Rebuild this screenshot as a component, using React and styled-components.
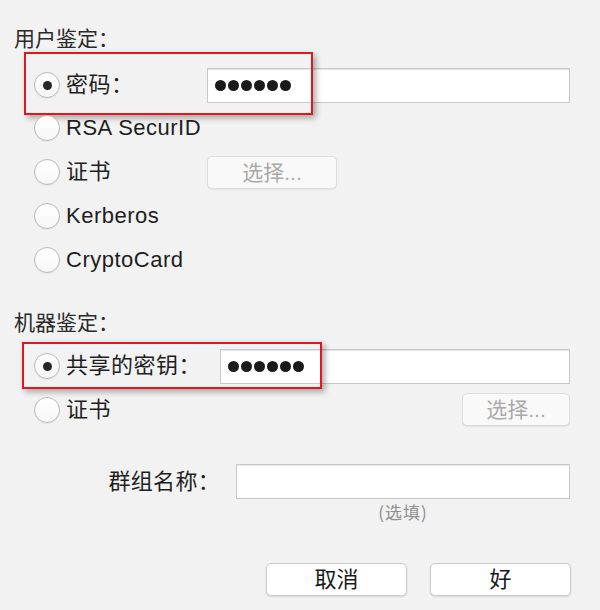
import React from "react"
import styled, { createGlobalStyle } from "styled-components"

const GlobalStyle = createGlobalStyle`
  html, body {
    margin: 0;
    padding: 0;
    background: #f2f2f2;
  }
  body {
    font-family: "Liberation Sans", "Noto Sans CJK SC", sans-serif;
    color: #1e1e1e;
  }
`

const Page = styled.div`
  width: 600px;
  height: 610px;
  box-sizing: border-box;
  padding: 27px 30px 0 14px;
  overflow: hidden;
`

const SectionTitle = styled.div`
  font-size: 21px;
  line-height: 24px;
  height: 24px;
  color: #2a2a2a;
  margin-top: ${p => p.$top || 0}px;
`

const OptionList = styled.div`
  margin-left: 20px;
  margin-top: ${p => p.$top}px;
  display: flex;
  flex-direction: column;
`

const Row = styled.div`
  position: relative;
  display: grid;
  grid-template-columns: ${p => p.$labelWidth}px 1fr;
  align-items: center;
  height: ${p => p.$height}px;
`

const RadioLabel = styled.label`
  display: flex;
  align-items: center;
  gap: 6px;
  font-size: 22px;
  line-height: 26px;
  letter-spacing: 0.5px;
`

const Radio = styled.span`
  box-sizing: border-box;
  width: 26px;
  height: 26px;
  border-radius: 50%;
  border: 1px solid #b9b9b9;
  background: linear-gradient(#ffffff, #f7f7f7);
  box-shadow: 0 1px 1px rgba(0, 0, 0, 0.06);
  display: flex;
  align-items: center;
  justify-content: center;

  &::after {
    content: "";
    width: 9px;
    height: 9px;
    border-radius: 50%;
    background: ${p => (p.$checked ? "#262626" : "transparent")};
  }
`

const Field = styled.div`
  box-sizing: border-box;
  height: 35px;
  background: #ffffff;
  border: 1px solid #c8c8c8;
  box-shadow: inset 0 1px 0 #e6e6e6;
  display: flex;
  align-items: center;
  padding-left: 7px;
`

const Dots = styled.div`
  display: flex;
  gap: 2px;
`

const Dot = styled.span`
  width: 11px;
  height: 11px;
  border-radius: 50%;
  background: #1a1a1a;
`

const ChooseButton = styled.button`
  box-sizing: border-box;
  width: ${p => p.$width}px;
  height: 33px;
  justify-self: ${p => (p.$right ? "end" : "start")};
  border: 1px solid #dddddd;
  border-radius: 5px;
  background: #f9f9f9;
  box-shadow: 0 1px 1px rgba(0, 0, 0, 0.07);
  color: #a9a9a9;
  font-family: inherit;
  font-size: 21px;
  line-height: 31px;
  padding: 0;
`

const Highlight = styled.div`
  position: absolute;
  left: ${p => p.$x}px;
  top: ${p => p.$y}px;
  width: ${p => p.$w}px;
  height: ${p => p.$h}px;
  box-sizing: border-box;
  border: 2px solid #e3161d;
  box-shadow: 3px 3px 6px rgba(0, 0, 0, 0.32);
  pointer-events: none;
`

const GroupRow = styled.div`
  display: grid;
  grid-template-columns: 206px 1fr;
  column-gap: 16px;
  align-items: center;
  margin-top: 33px;
`

const GroupLabel = styled.div`
  font-size: 22px;
  line-height: 26px;
  letter-spacing: 0.3px;
  text-align: right;
`

const Hint = styled.div`
  grid-column: 2;
  text-align: center;
  font-family: "Noto Sans CJK SC", sans-serif;
  font-size: 17px;
  line-height: 20px;
  letter-spacing: 1px;
  color: #8f8f8f;
  margin-top: 3px;
`

const Footer = styled.div`
  display: flex;
  justify-content: flex-end;
  gap: 23px;
  margin-top: 41px;
  margin-right: -1px;
`

const DialogButton = styled.button`
  box-sizing: border-box;
  width: 141px;
  height: 33px;
  border: 1px solid #cbcbcb;
  border-radius: 5px;
  background: #ffffff;
  box-shadow: 0 1px 2px rgba(0, 0, 0, 0.12);
  color: #1a1a1a;
  font-family: inherit;
  font-size: 22px;
  line-height: 31px;
  padding: 0;
`

const Password = () => (
  <Field>
    <Dots>
      {Array.from({ length: 6 }).map((_, i) => (
        <Dot key={i} />
      ))}
    </Dots>
  </Field>
)

const Option = ({ checked, children }) => (
  <RadioLabel>
    <Radio $checked={checked} />
    {children}
  </RadioLabel>
)

export default function App() {
  return (
    <Page>
      <GlobalStyle />
      <SectionTitle>用户鉴定：</SectionTitle>
      <OptionList $top={13}>
        <Row $labelWidth={173} $height={42}>
          <Option checked>密码：</Option>
          <Password />
          <Highlight $x={-10} $y={-12} $w={289} $h={63} />
        </Row>
        <Row $labelWidth={173} $height={44}>
          <Option>RSA SecurID</Option>
        </Row>
        <Row $labelWidth={173} $height={44}>
          <Option>证书</Option>
          <ChooseButton $width={130}>选择...</ChooseButton>
        </Row>
        <Row $labelWidth={173} $height={44}>
          <Option>Kerberos</Option>
        </Row>
        <Row $labelWidth={173} $height={44}>
          <Option>CryptoCard</Option>
        </Row>
      </OptionList>

      <SectionTitle $top={29}>机器鉴定：</SectionTitle>
      <OptionList $top={9}>
        <Row $labelWidth={186} $height={44}>
          <Option checked>共享的密钥：</Option>
          <Password />
          <Highlight $x={-12} $y={-2} $w={300} $h={47} />
        </Row>
        <Row $labelWidth={186} $height={43}>
          <Option>证书</Option>
          <ChooseButton $width={108} $right>
            选择...
          </ChooseButton>
        </Row>
      </OptionList>

      <GroupRow>
        <GroupLabel>群组名称：</GroupLabel>
        <Field />
        <Hint>(选填)</Hint>
      </GroupRow>

      <Footer>
        <DialogButton>取消</DialogButton>
        <DialogButton>好</DialogButton>
      </Footer>
    </Page>
  )
}
